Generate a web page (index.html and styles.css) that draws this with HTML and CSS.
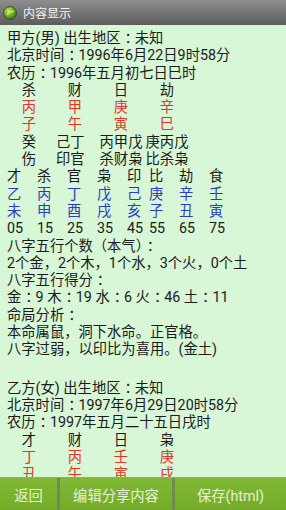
FILE: index.html
```html
<!DOCTYPE html>
<html lang="zh-CN">
<head>
  <meta charset="UTF-8">
  <meta name="viewport" content="width=device-width, initial-scale=1.0">
  <title>内容显示</title>
  <link rel="stylesheet" href="styles.css">
</head>
<body>
  <!-- Title bar -->
  <div class="titlebar">
    <svg class="app-icon" viewBox="0 0 14 14" width="14" height="14" xmlns="http://www.w3.org/2000/svg">
      <defs>
        <radialGradient id="ball" cx="0.4" cy="0.35" r="0.7">
          <stop offset="0" stop-color="#d8e86a"/>
          <stop offset="0.45" stop-color="#7cb82e"/>
          <stop offset="1" stop-color="#2f6a18"/>
        </radialGradient>
      </defs>
      <circle cx="7" cy="7" r="6.5" fill="url(#ball)" stroke="#2a4a18" stroke-width="0.8"/>
      <path d="M4.5 8.5 Q7 4.5 10 5.5" stroke="#f2e27a" stroke-width="1.3" fill="none" stroke-linecap="round"/>
    </svg>
    <span>内容显示</span>
  </div>

  <!-- Content -->
  <div class="content">
    <div class="line">甲方(男) 出生地区<span class="cl">：</span>未知</div>
    <div class="line">北京时间<span class="cl">：</span>1996年6月22日9时58分</div>
    <div class="line">农历<span class="cl">：</span>1996年五月初七日巳时</div>
    <div class="pillars"><span>杀</span><span>财</span><span>日</span><span>劫</span></div>
    <div class="pillars red"><span>丙</span><span>甲</span><span>庚</span><span>辛</span></div>
    <div class="pillars red"><span>子</span><span>午</span><span>寅</span><span>巳</span></div>
    <div class="pillars stems"><span>癸</span><span>己丁</span><span>丙甲戊</span><span>庚丙戊</span></div>
    <div class="pillars stems"><span>伤</span><span>印官</span><span>杀财枭</span><span>比杀枭</span></div>
    <div class="luck"><span>才</span><span>杀</span><span>官</span><span>枭</span><span>印</span><span>比</span><span>劫</span><span>食</span></div>
    <div class="luck blue"><span>乙</span><span>丙</span><span>丁</span><span>戊</span><span>己</span><span>庚</span><span>辛</span><span>壬</span></div>
    <div class="luck blue"><span>未</span><span>申</span><span>酉</span><span>戌</span><span>亥</span><span>子</span><span>丑</span><span>寅</span></div>
    <div class="luck"><span>05</span><span>15</span><span>25</span><span>35</span><span>45</span><span>55</span><span>65</span><span>75</span></div>
    <div class="line">八字五行个数（本气）<span class="cl">：</span></div>
    <div class="line">2个金，2个木，1个水，3个火，0个土</div>
    <div class="line">八字五行得分<span class="cl">：</span></div>
    <div class="line">金<span class="cl">：</span>9 木<span class="cl">：</span>19 水<span class="cl">：</span>6 火<span class="cl">：</span>46 土<span class="cl">：</span>11</div>
    <div class="line">命局分析<span class="cl">：</span></div>
    <div class="line">本命属鼠，洞下水命。正官格。</div>
    <div class="line">八字过弱，以印比为喜用。(金土)</div>
    <div class="blank"></div>
    <div class="line">乙方(女) 出生地区<span class="cl">：</span>未知</div>
    <div class="line">北京时间<span class="cl">：</span>1997年6月29日20时58分</div>
    <div class="line">农历<span class="cl">：</span>1997年五月二十五日戌时</div>
    <div class="pillars"><span>才</span><span>财</span><span>日</span><span>枭</span></div>
    <div class="pillars red"><span>丁</span><span>丙</span><span>壬</span><span>庚</span></div>
    <div class="pillars red"><span>丑</span><span>午</span><span>寅</span><span>戌</span></div>
  </div>

  <!-- Bottom buttons -->
  <div class="button-bar">
    <div class="bar-button">返回</div>
    <div class="bar-button">编辑分享内容</div>
    <div class="bar-button">保存(html)</div>
  </div>
</body>
</html>
```

FILE: styles.css
```css
* {
  margin: 0;
  padding: 0;
  box-sizing: border-box;
}

body {
  width: 286px;
  height: 510px;
  display: flex;
  flex-direction: column;
  overflow: hidden;
  font-family: Roboto, "Noto Sans CJK SC", sans-serif;
  background-color: #d7f7d7;
}

.titlebar {
  height: 25px;
  display: flex;
  align-items: center;
  gap: 6px;
  padding-left: 3px;
  background: linear-gradient(#8e8e8e, #5c5c5c);
  color: #f4f4f4;
  font-size: 12px;
  flex-shrink: 0;
}

.app-icon {
  flex-shrink: 0;
}

.content {
  flex-grow: 1;
  overflow: hidden;
  padding: 5px 7px 0;
  font-size: 14.3px;
  line-height: 17.3px;
  color: #1b1b1b;
  white-space: nowrap;
}

/* full-width colon sits centred in its cell on the device */
.cl {
  padding-left: 4px;
  letter-spacing: -4px;
}

.blank {
  height: 21px;
}

.pillars {
  display: grid;
  grid-template-columns: repeat(4, 46px);
  margin-left: -1px;
  text-align: center;
}

.stems span:nth-child(2) {
  text-align: left;
  padding-left: 4px;
}

.luck {
  display: grid;
  grid-template-columns: repeat(4, 30px) 22px repeat(3, 30px);
}

.red {
  color: #e2342c;
}

.blue {
  color: #2a3cc4;
}

.button-bar {
  height: 33px;
  flex-shrink: 0;
  display: grid;
  grid-template-columns: 57px 112px 111px;
  gap: 3px;
  background-color: #6f8a52;
  border-top: 1px solid #93a87c;
}

.bar-button {
  display: flex;
  align-items: center;
  justify-content: center;
  background: linear-gradient(#80b834, #74ab2a);
  color: #e6f2d8;
  font-size: 14.3px;
}
```
